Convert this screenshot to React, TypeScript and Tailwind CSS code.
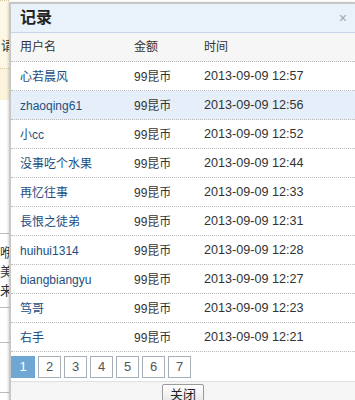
import React from 'react';

const records = [
  { name: '心若晨风', amount: '99昆币', time: '2013-09-09 12:57' },
  { name: 'zhaoqing61', amount: '99昆币', time: '2013-09-09 12:56' },
  { name: '小cc', amount: '99昆币', time: '2013-09-09 12:52' },
  { name: '没事吃个水果', amount: '99昆币', time: '2013-09-09 12:44' },
  { name: '再忆往事', amount: '99昆币', time: '2013-09-09 12:33' },
  { name: '長恨之徒弟', amount: '99昆币', time: '2013-09-09 12:31' },
  { name: 'huihui1314', amount: '99昆币', time: '2013-09-09 12:28' },
  { name: 'biangbiangyu', amount: '99昆币', time: '2013-09-09 12:27' },
  { name: '笃哥', amount: '99昆币', time: '2013-09-09 12:23' },
  { name: '右手', amount: '99昆币', time: '2013-09-09 12:21' },
];

const pages = [1, 2, 3, 4, 5, 6, 7];

function PageBehind() {
  return (
    <div className="w-[9px] shrink-0 flex flex-col text-[13px] leading-none text-[#333]">
      <div className="h-[68px] bg-[#fdf8e6] border-t border-dotted border-[#d9c9a0] pt-[38px] pl-[1px]">请</div>
      <div className="h-[32px] bg-[#fbf3dc] border-t border-dotted border-[#d9c9a0]" />
      <div className="h-[133px] bg-white" />
      <div className="h-[74px] bg-white border-t border-[#bbb] pt-[12px] flex flex-col gap-[6px]">
        <span>咿</span>
        <span>美</span>
        <span>来</span>
      </div>
      <div className="h-[35px] bg-white border-t border-[#bbb]" />
      <div className="h-[50px] bg-white border-t border-[#bbb]" />
      <div className="flex-1 bg-white border-t border-[#bbb]" />
    </div>
  );
}

export default function App() {
  return (
    <div
      className="w-[355px] h-[400px] overflow-hidden flex bg-white"
      style={{ fontFamily: '"Liberation Sans", "Noto Sans CJK SC", sans-serif' }}
    >
      <PageBehind />
      <div className="flex-1 mt-[2px] border-l-2 border-t-2 border-[#c8c8c8] bg-white flex flex-col shadow-[-1px_0_2px_rgba(0,0,0,0.15)]">
        <div className="h-[29px] shrink-0 bg-[#e9f1fa] border-b border-[#c5d7ec] flex items-center justify-between pl-[9px] pr-[8px]">
          <span className="text-[16px] font-bold text-[#222]">记录</span>
          <span className="text-[14px] text-[#9aa6b2] leading-none">×</span>
        </div>
        <div className="h-[29px] shrink-0 bg-[#f6f6f6] border-b border-dotted border-[#bbb] flex items-center text-[12px] text-[#333]">
          <span className="w-[123px] pl-[9px]">用户名</span>
          <span className="w-[70px]">金额</span>
          <span>时间</span>
        </div>
        {records.map((r, i) => (
          <div
            key={r.time}
            className={`h-[29px] shrink-0 border-b border-dotted border-[#bbb] flex items-center pt-[1px] text-[12px] ${
              i === 1 ? 'bg-[#e6eff9]' : 'bg-white'
            }`}
          >
            <span className="w-[123px] pl-[9px] text-[#1d4e7e]">{r.name}</span>
            <span className="w-[70px] text-[#333]">{r.amount}</span>
            <span className="text-[#333] text-[12.6px]">{r.time}</span>
          </div>
        ))}
        <div className="h-[30px] shrink-0 flex items-center gap-[3px] pt-[1px] border-b border-[#e0e0e0]">
          {pages.map((p) => (
            <span
              key={p}
              className={`h-[22px] flex items-center justify-center text-[13px] ${
                p === 1
                  ? 'bg-[#6ea7d3] text-white w-[24px]'
                  : 'w-[23px] bg-white border border-[#a7b0b8] text-[#555]'
              }`}
            >
              {p}
            </span>
          ))}
        </div>
        <div className="flex-1 bg-[#f5f5f5] flex justify-center pt-[2px]">
          <button className="h-[20px] px-[7px] text-[13px] text-[#222] border border-[#9a9a9a] rounded-[2px] bg-gradient-to-b from-white to-[#e6e6e6] leading-none">
            关闭
          </button>
        </div>
      </div>
    </div>
  );
}
